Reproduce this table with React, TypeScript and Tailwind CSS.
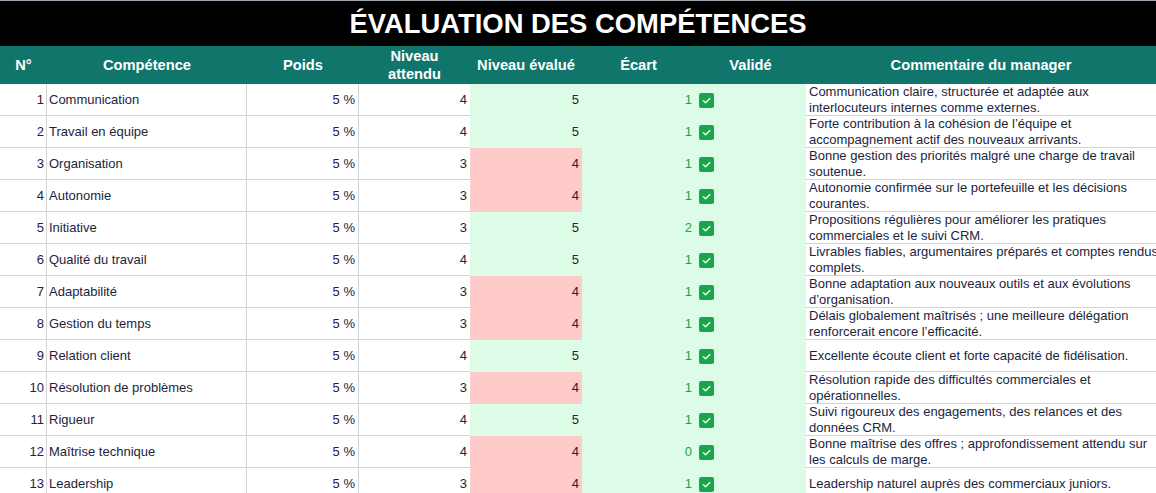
import React from "react";

type Row = {
  n: number;
  name: string;
  expected: number;
  rated: number;
  gap: number;
  comment: string[];
};

const rows: Row[] = [
  { n: 1, name: "Communication", expected: 4, rated: 5, gap: 1, comment: ["Communication claire, structurée et adaptée aux", "interlocuteurs internes comme externes."] },
  { n: 2, name: "Travail en équipe", expected: 4, rated: 5, gap: 1, comment: ["Forte contribution à la cohésion de l’équipe et", "accompagnement actif des nouveaux arrivants."] },
  { n: 3, name: "Organisation", expected: 3, rated: 4, gap: 1, comment: ["Bonne gestion des priorités malgré une charge de travail", "soutenue."] },
  { n: 4, name: "Autonomie", expected: 3, rated: 4, gap: 1, comment: ["Autonomie confirmée sur le portefeuille et les décisions", "courantes."] },
  { n: 5, name: "Initiative", expected: 3, rated: 5, gap: 2, comment: ["Propositions régulières pour améliorer les pratiques", "commerciales et le suivi CRM."] },
  { n: 6, name: "Qualité du travail", expected: 4, rated: 5, gap: 1, comment: ["Livrables fiables, argumentaires préparés et comptes rendus", "complets."] },
  { n: 7, name: "Adaptabilité", expected: 3, rated: 4, gap: 1, comment: ["Bonne adaptation aux nouveaux outils et aux évolutions", "d’organisation."] },
  { n: 8, name: "Gestion du temps", expected: 3, rated: 4, gap: 1, comment: ["Délais globalement maîtrisés ; une meilleure délégation", "renforcerait encore l’efficacité."] },
  { n: 9, name: "Relation client", expected: 4, rated: 5, gap: 1, comment: ["Excellente écoute client et forte capacité de fidélisation."] },
  { n: 10, name: "Résolution de problèmes", expected: 3, rated: 4, gap: 1, comment: ["Résolution rapide des difficultés commerciales et", "opérationnelles."] },
  { n: 11, name: "Rigueur", expected: 4, rated: 5, gap: 1, comment: ["Suivi rigoureux des engagements, des relances et des", "données CRM."] },
  { n: 12, name: "Maîtrise technique", expected: 4, rated: 4, gap: 0, comment: ["Bonne maîtrise des offres ; approfondissement attendu sur", "les calculs de marge."] },
  { n: 13, name: "Leadership", expected: 3, rated: 4, gap: 1, comment: ["Leadership naturel auprès des commerciaux juniors."] },
];

const cols = "grid grid-cols-[47px_200px_112px_111px_112px_113px_111px_350px]";

const Check = () => (
  <span className="flex h-[15px] w-[15px] items-center justify-center rounded-[2px] bg-[#1ea34d]">
    <svg width="11" height="11" viewBox="0 0 12 12" fill="none">
      <path d="M2.5 6.2 L5 8.5 L9.6 3.8" stroke="white" strokeWidth="1.3" strokeLinecap="round" strokeLinejoin="round" />
    </svg>
  </span>
);

export default function App() {
  return (
    <div
      className="h-[493px] w-[1156px] overflow-hidden bg-white text-[#1c2540]"
      style={{ fontFamily: '"Liberation Sans", Arial, sans-serif' }}
    >
      <div className="flex h-[46px] items-center justify-center border-t border-[#9ca3af] bg-black">
        <h1 className="text-[27.4px] font-bold leading-none text-white">ÉVALUATION DES COMPÉTENCES</h1>
      </div>

      <div className={`${cols} h-[38px] bg-[#10766c] text-[14.67px] font-bold leading-[18px] text-white`}>
        <div className="flex items-center justify-center">N°</div>
        <div className="flex items-center justify-center">Compétence</div>
        <div className="flex items-center justify-center">Poids</div>
        <div className="flex items-center justify-center text-center">
          Niveau
          <br />
          attendu
        </div>
        <div className="flex items-center justify-center">Niveau évalué</div>
        <div className="flex items-center justify-center">Écart</div>
        <div className="flex items-center justify-center">Validé</div>
        <div className="flex items-center justify-center">Commentaire du manager</div>
      </div>

      {rows.map((r) => (
        <div key={r.n} className={`${cols} h-8 text-[13px]`}>
          <div className="flex items-center justify-end border-r border-b border-[#d4d4d4] pr-[2px]">{r.n}</div>
          <div className="flex items-center border-r border-b border-[#d4d4d4] pl-[2px]">{r.name}</div>
          <div className="flex items-center justify-end border-r border-b border-[#d4d4d4] pr-[3px]">5 %</div>
          <div className="flex items-center justify-end border-b border-[#d4d4d4] pr-[3px]">{r.expected}</div>
          <div className={`flex items-center justify-end pr-[3px] ${r.rated === 5 ? "bg-[#dcfce7]" : "bg-[#fecaca]"}`}>
            {r.rated}
          </div>
          <div className="flex items-center justify-end bg-[#dcfce7] pr-[3px] text-[#1fa34a]">{r.gap}</div>
          <div className="flex items-center bg-[#dcfce7] pl-[4px]">
            <Check />
          </div>
          <div className="flex flex-col justify-center overflow-hidden whitespace-nowrap border-b border-[#d4d4d4] pl-[3px] leading-[16px]">
            {r.comment.map((l) => (
              <span key={l}>{l}</span>
            ))}
          </div>
        </div>
      ))}
    </div>
  );
}
